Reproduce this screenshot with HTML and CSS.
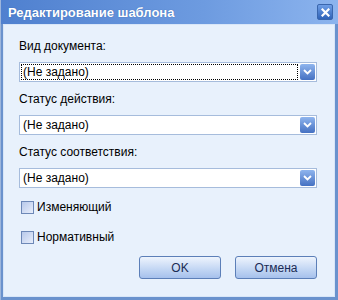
FILE: index.html
```html
<!DOCTYPE html>
<html lang="ru">
<head>
    <meta charset="UTF-8">
    <title>Редактирование шаблона</title>
    <link rel="stylesheet" href="styles.css">
</head>
<body>
    <div class="window">
        <div class="titlebar">
            <span class="title">Редактирование шаблона</span>
            <div class="close-btn">
                <svg width="9" height="9" viewBox="0 0 9 9"><path d="M1.5 1.5 L7.5 7.5 M7.5 1.5 L1.5 7.5" stroke="#fff" stroke-width="2.2" stroke-linecap="square"/></svg>
            </div>
        </div>
        <div class="content">
            <div class="field">
                <label>Вид документа:</label>
                <div class="select focused">
                    <span class="value">(Не задано)</span>
                    <span class="arrow"><svg width="9" height="6" viewBox="0 0 9 6"><path d="M1 1 L4.5 4.5 L8 1" stroke="#fff" stroke-width="1.8" fill="none"/></svg></span>
                </div>
            </div>
            <div class="field">
                <label>Статус действия:</label>
                <div class="select">
                    <span class="value">(Не задано)</span>
                    <span class="arrow"><svg width="9" height="6" viewBox="0 0 9 6"><path d="M1 1 L4.5 4.5 L8 1" stroke="#fff" stroke-width="1.8" fill="none"/></svg></span>
                </div>
            </div>
            <div class="field">
                <label>Статус соответствия:</label>
                <div class="select">
                    <span class="value">(Не задано)</span>
                    <span class="arrow"><svg width="9" height="6" viewBox="0 0 9 6"><path d="M1 1 L4.5 4.5 L8 1" stroke="#fff" stroke-width="1.8" fill="none"/></svg></span>
                </div>
            </div>
            <div class="checks">
                <div class="check-row">
                    <span class="checkbox"></span>
                    <span>Изменяющий</span>
                </div>
                <div class="check-row">
                    <span class="checkbox"></span>
                    <span>Нормативный</span>
                </div>
            </div>
            <div class="buttons">
                <button class="btn">OK</button>
                <button class="btn">Отмена</button>
            </div>
        </div>
    </div>
</body>
</html>
```

FILE: styles.css
```css
* {
    margin: 0;
    padding: 0;
    box-sizing: border-box;
}

body {
    font-family: "Liberation Sans", Arial, sans-serif;
    font-size: 12px;
    color: #000;
    background: #fff;
}

.window {
    width: 338px;
    height: 300px;
    background: #6a92cd;
    border-left: 1px solid #9db6dc;
    display: flex;
    flex-direction: column;
}

.titlebar {
    height: 24px;
    display: flex;
    align-items: center;
    justify-content: space-between;
    padding: 0 5px 0 7px;
    background: linear-gradient(to right, #4f80cf, #6d9be0 60%, #8cb4ee);
}

.title {
    color: #fff;
    font-weight: bold;
    font-size: 13px;
    text-shadow: 0 0 1px #2f5ea8;
}

.close-btn {
    width: 16px;
    height: 16px;
    border-radius: 2px;
    background: linear-gradient(#6e9ee6, #2f63b8);
    border: 1px solid #3a66ad;
    display: flex;
    align-items: center;
    justify-content: center;
}

.content {
    flex: 1;
    margin: 0 3px 3px 2px;
    background: #e8f1fc;
    border: 1px solid #d8e6f8;
    padding: 14px 17px 0 15px;
}

.field label {
    display: block;
    height: 14px;
    line-height: 14px;
}

.select {
    margin-top: 9px;
    margin-bottom: 10px;
    height: 20px;
    background: #fff;
    border: 1px solid #a6bcdc;
    display: flex;
    align-items: center;
    justify-content: space-between;
    padding: 1px;
}

.select .value {
    flex: 1;
    height: 16px;
    line-height: 14px;
    padding-left: 1px;
    border: 1px dotted transparent;
}

.select.focused .value {
    border-color: #000;
}

.select .arrow {
    width: 15px;
    height: 16px;
    margin-left: 2px;
    border-radius: 2px;
    background: linear-gradient(#8fb5ee, #4571c2);
    display: flex;
    align-items: center;
    justify-content: center;
}

.checks {
    padding-top: 2px;
}

.check-row {
    display: flex;
    align-items: center;
    gap: 3px;
    height: 14px;
    margin: 0 0 16px 2px;
}

.check-row:last-child {
    margin-bottom: 12px;
}

.checkbox {
    width: 13px;
    height: 13px;
    border: 1px solid #6d88b7;
    background: linear-gradient(135deg, #b8c9ea, #e8eefb);
}

.buttons {
    display: flex;
    justify-content: flex-end;
    gap: 14px;
}

.btn {
    width: 82px;
    height: 23px;
    font-family: "Liberation Sans", Arial, sans-serif;
    font-size: 12px;
    color: #1a2b55;
    border: 1px solid #5c7fb8;
    border-radius: 3px;
    background: linear-gradient(#eef4fd, #c5d8f4 55%, #a6c1ec);
}
```
